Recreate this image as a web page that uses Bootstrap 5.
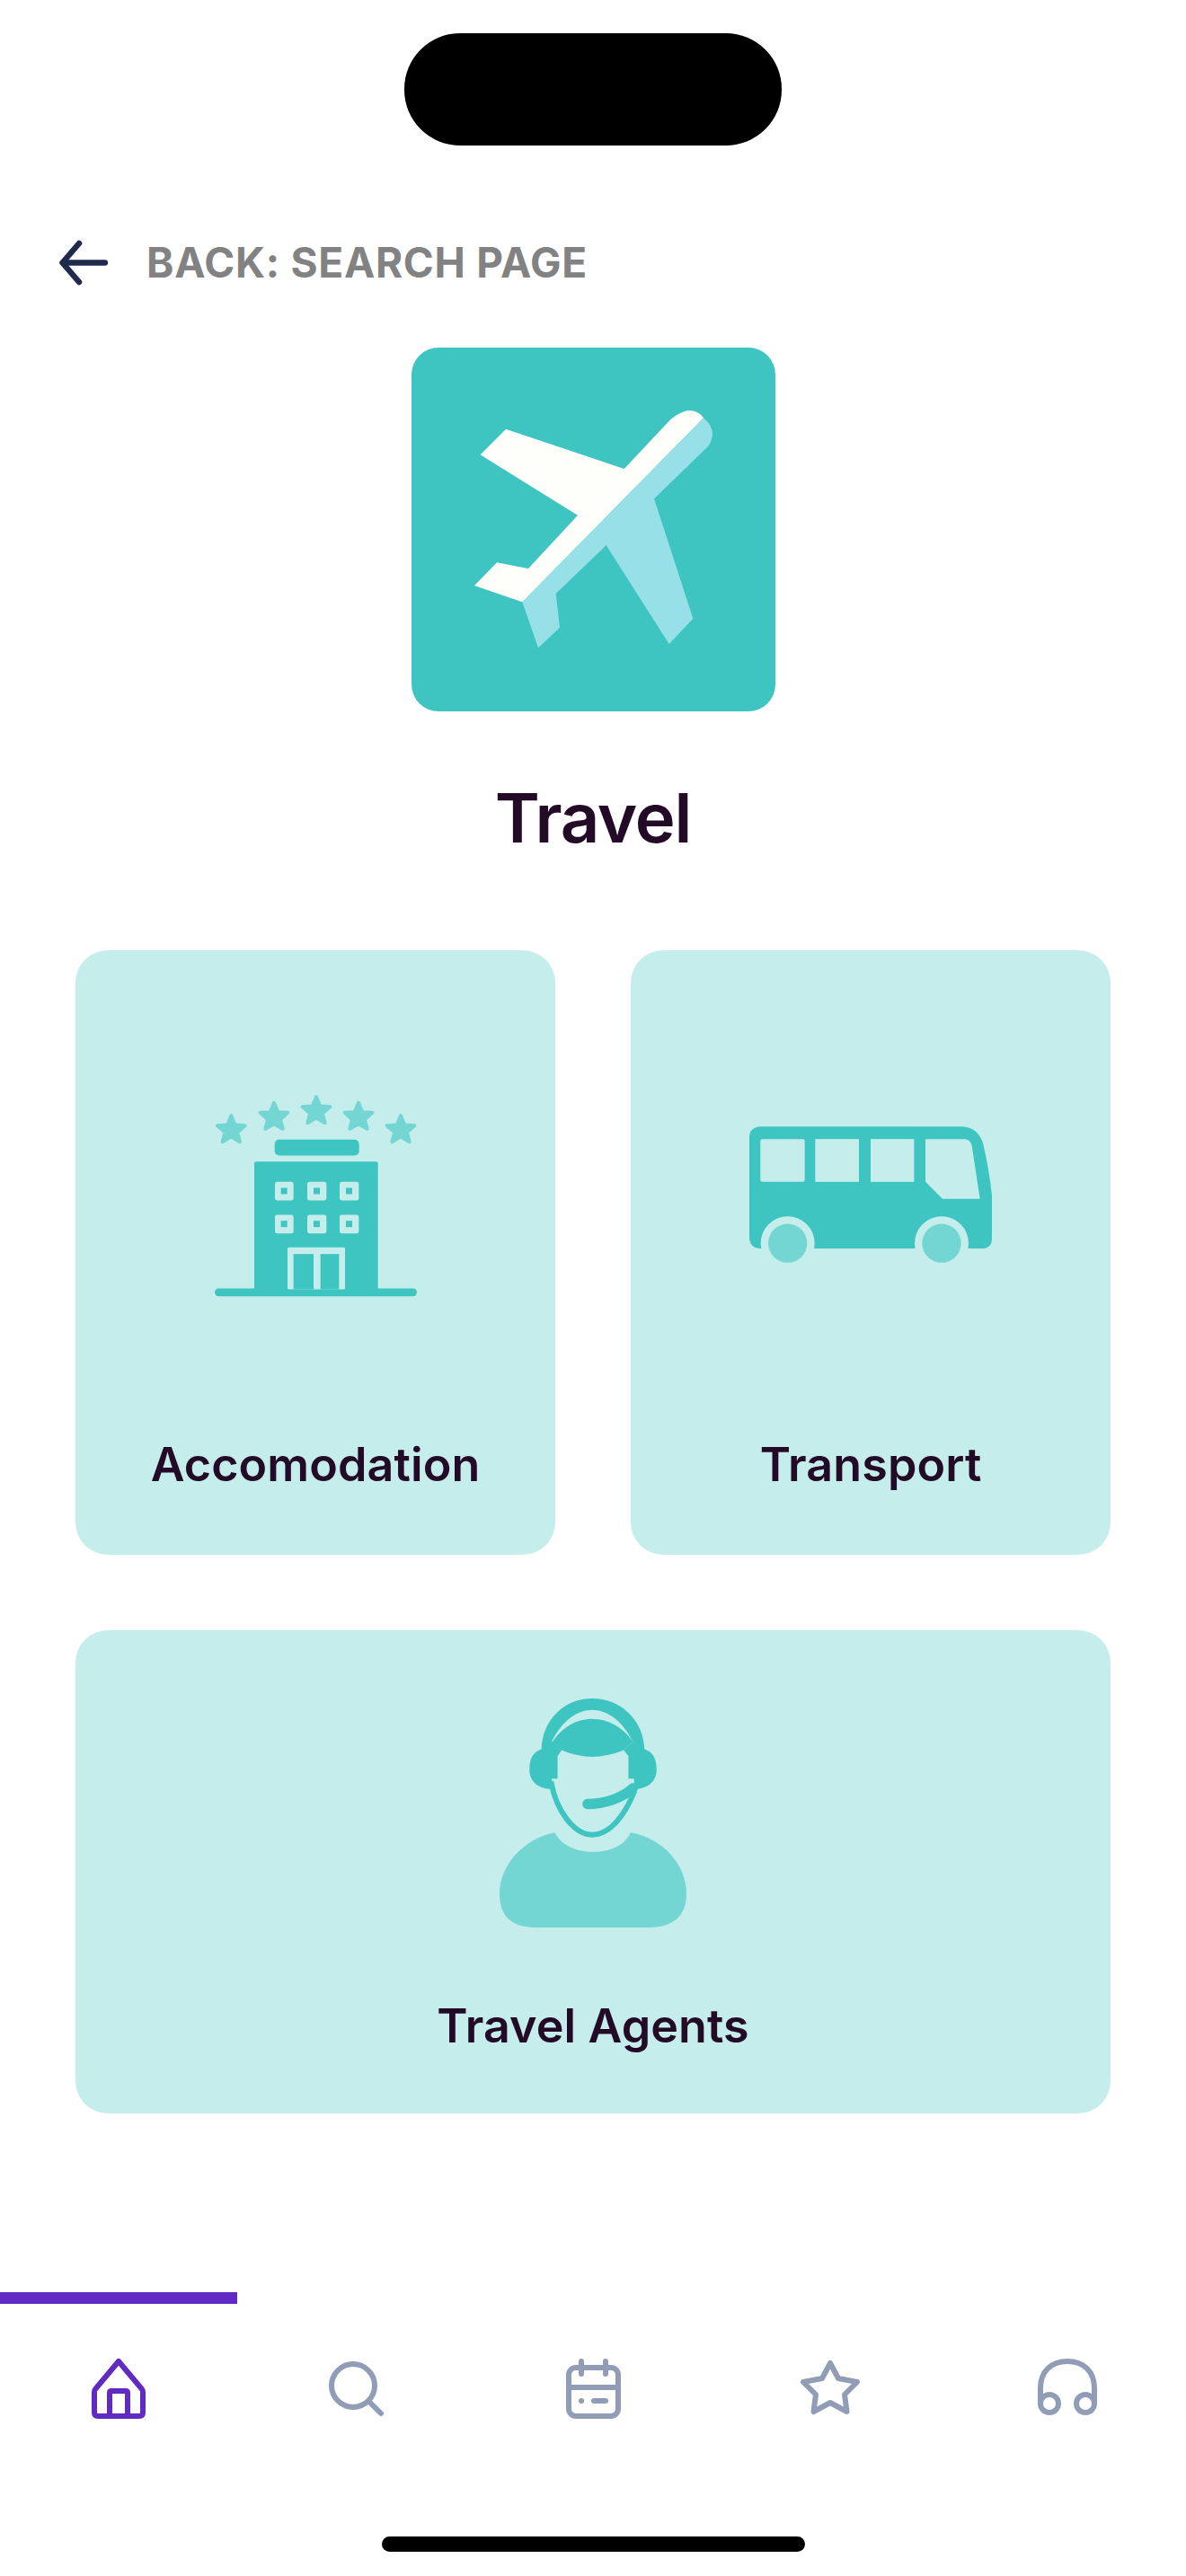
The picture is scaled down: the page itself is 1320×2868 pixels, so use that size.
<!DOCTYPE html>
<html lang="en">
<head>
<meta charset="utf-8">
<title>Travel</title>
<link href="https://cdn.jsdelivr.net/npm/bootstrap@5.3.0/dist/css/bootstrap.min.css" rel="stylesheet">
<style>
body{background:#fff;font-family:Inter,"Liberation Sans",sans-serif;color:#230a26}
.phone-page{width:1320px;height:2868px;overflow:hidden}
.sensor-island{width:420px;height:125px;margin-top:37px;background:#000;border-radius:62px}
.back-row{height:54px;margin-top:103px;padding-left:66px;gap:43px}
.back-label{font-size:46px;font-weight:700;line-height:54px;color:#828282;letter-spacing:.7px}
.hero-tile{width:405px;height:405px;margin-top:68px;background:#3fc5c1;border-radius:30px}
.page-heading{font-size:76px;font-weight:600;line-height:100px;margin:68px 0 0;color:#230a26;letter-spacing:-1.2px}
.category-grid{display:grid;grid-template-columns:534px 534px;gap:84px;padding:0 84px;margin-top:98px}
.category-card{background:#c5edeb;border-radius:36px}
.category-tall{height:673px}
.category-wide{grid-column:1 / 3;height:538px;padding-top:76px}
.icon-zone{height:544px}
.category-label{font-size:52px;font-weight:600;line-height:58px;color:#230a26;margin:0;letter-spacing:.1px}
.category-tall .category-label{margin-bottom:71px}
.category-wide .category-label{margin-top:81px}
.tab-bar{margin-top:auto}
.tab-item{width:264px;height:148px;padding-top:58px;border-top:13px solid transparent}
.tab-item.is-current{border-top-color:#602ac3}
.tab-icon{fill:none;stroke:#919db6;stroke-width:6;stroke-linecap:round;stroke-linejoin:round}
.is-current .tab-icon{stroke:#602ac3}
.home-indicator-wrap{height:168px;padding-top:124px}
.home-indicator{width:471px;height:17px;background:#000;border-radius:9px}
</style>
</head>
<body>
<div class="phone-page d-flex flex-column">
  <div class="sensor-island mx-auto flex-shrink-0"></div>

  <a class="back-row d-flex align-items-center text-decoration-none flex-shrink-0" href="#">
    <svg width="54" height="54" viewBox="0 0 54 54" fill="none" stroke="#1f2a4d" stroke-width="6.5" stroke-linecap="round" stroke-linejoin="round" aria-hidden="true"><path d="M22 6 L3.500 27.500 L22 49"/><path d="M4 27.500 H51"/></svg>
    <span class="back-label">BACK: SEARCH PAGE</span>
  </a>

  <div class="hero-tile mx-auto flex-shrink-0">
    <svg width="405" height="405" viewBox="0 0 1215 1215" aria-hidden="true">
      <path fill="#fefffb" d="M370 850 L210 795 L285 718 L390 738 L555 560 L230 358 L315 272 L710 405 L865 240 Q900 210 930 210 Q960 212 975 235 Z"/>
      <path fill="#98e0e8" d="M975 235 Q1005 260 1005 290 Q1002 315 990 330 L810 505 L940 905 L860 990 L650 660 L482 822 L495 935 L423 1003 L370 850 Z"/>
    </svg>
  </div>

  <h1 class="page-heading text-center">Travel</h1>

  <div class="category-grid">
    <div class="card border-0 category-card category-tall">
      <div class="icon-zone d-flex align-items-center justify-content-center">
        <svg width="225" height="227" viewBox="115 80 675 680" aria-hidden="true">
          <defs><polygon id="hotelStar" points="0,-48 13,-17 46,-15 21,7 29,39 0,22 -29,39 -21,7 -46,-15 -13,-17" stroke-width="12" stroke-linejoin="round"/></defs>
          <g fill="#74d6d3" stroke="#74d6d3">
            <use href="#hotelStar" x="170" y="203"/><use href="#hotelStar" x="313" y="160"/><use href="#hotelStar" x="454" y="140"/><use href="#hotelStar" x="595" y="160"/><use href="#hotelStar" x="736" y="203"/>
          </g>
          <g fill="#3fc5c1">
            <rect x="315" y="235" width="282" height="53" rx="15"/>
            <rect x="247" y="308" width="413" height="435" rx="6"/>
            <rect x="115" y="732" width="675" height="26" rx="13"/>
          </g>
          <g fill="#c5edeb">
            <rect x="316" y="376" width="62" height="62" rx="8"/><rect x="424" y="376" width="64" height="62" rx="8"/><rect x="532" y="376" width="64" height="62" rx="8"/>
            <rect x="316" y="486" width="62" height="62" rx="8"/><rect x="424" y="486" width="64" height="62" rx="8"/><rect x="532" y="486" width="64" height="62" rx="8"/>
            <rect x="358" y="595" width="192" height="140" rx="4"/>
          </g>
          <g fill="#3fc5c1">
            <rect x="336" y="396" width="21" height="21"/><rect x="445" y="396" width="21" height="21"/><rect x="553" y="396" width="21" height="21"/>
            <rect x="336" y="506" width="21" height="21"/><rect x="445" y="506" width="21" height="21"/><rect x="553" y="506" width="21" height="21"/>
            <rect x="378" y="617" width="67" height="118"/><rect x="468" y="617" width="62" height="118"/>
          </g>
        </svg>
      </div>
      <p class="category-label text-center">Accomodation</p>
    </div>

    <div class="card border-0 category-card category-tall">
      <div class="icon-zone d-flex align-items-center justify-content-center">
        <svg width="270" height="152" viewBox="105 100 810 455" aria-hidden="true">
          <path fill="#3fc5c1" d="M140 100 H820 Q868 105 885 155 Q905 240 915 330 V475 Q915 505 885 508 H140 Q108 505 105 475 V135 Q105 105 140 100 Z"/>
          <g fill="#c5edeb">
            <rect x="142" y="142" width="148" height="143" rx="6"/>
            <rect x="325" y="142" width="146" height="143"/>
            <rect x="510" y="142" width="145" height="143"/>
            <path d="M693 142 H825 Q845 145 848 165 L875 342 H750 L693 285 Z"/>
            <circle cx="233" cy="490" r="90"/><circle cx="747" cy="490" r="90"/>
            <rect x="130" y="508" width="760" height="60"/>
          </g>
          <circle cx="233" cy="490" r="65" fill="#74d6d3"/><circle cx="747" cy="490" r="65" fill="#74d6d3"/>
        </svg>
      </div>
      <p class="category-label text-center">Transport</p>
    </div>

    <div class="card border-0 category-card category-wide align-items-center">
      <svg width="208" height="255" viewBox="110 92 625 766" aria-hidden="true">
        <path fill="#74d6d3" d="M295 540 C320 590 380 605 420 605 C470 605 525 590 548 540 C660 560 735 650 735 745 C735 820 690 858 610 858 L230 858 C150 858 110 820 110 745 C110 650 190 560 295 540 Z"/>
        <g fill="#3fc5c1">
          <path d="M250 270 C250 160 330 92 420 92 C510 92 595 160 595 270 L555 235 C520 165 470 130 420 130 C370 130 320 165 285 235 Z"/>
          <path d="M285 240 C320 185 370 160 420 160 C470 160 520 185 555 235 L525 265 C490 280 450 287 420 287 C390 287 350 280 318 265 Z"/>
          <path d="M250 262 L285 235 L318 265 L304 285 V360 H285 V395 C240 395 210 370 210 330 C210 290 225 270 250 262 Z"/>
          <path d="M595 262 L555 235 L525 265 L541 285 V360 H560 V395 C605 395 635 370 635 330 C635 290 620 270 595 262 Z"/>
        </g>
        <path fill="none" stroke="#3fc5c1" stroke-width="18" d="M282 370 C300 470 360 548 420 548 C480 548 530 480 562 400"/>
        <path fill="none" stroke="#3fc5c1" stroke-width="34" stroke-linecap="round" d="M404 445 C460 445 520 425 556 392"/>
      </svg>
      <p class="category-label text-center">Travel Agents</p>
    </div>
  </div>

  <nav class="tab-bar d-flex flex-shrink-0" aria-label="Main">
    <a class="tab-item is-current d-flex justify-content-center" href="#" aria-label="Home">
      <svg class="tab-icon" width="72" height="72" viewBox="0 0 72 72"><path d="M36 6 L62 37 Q63 38 63 40 V63 Q63 67 59 67 H13 Q9 67 9 63 V40 Q9 38 10 37 Z"/><path d="M26 67 V41 Q26 39 28 39 H44 Q46 39 46 41 V67"/></svg>
    </a>
    <a class="tab-item d-flex justify-content-center" href="#" aria-label="Search">
      <svg class="tab-icon" width="72" height="72" viewBox="0 0 72 72"><circle cx="33" cy="33" r="24"/><path d="M52 52 L64 64"/></svg>
    </a>
    <a class="tab-item d-flex justify-content-center" href="#" aria-label="Calendar">
      <svg class="tab-icon" width="72" height="72" viewBox="0 0 72 72"><rect x="9" y="13" width="55" height="54" rx="8"/><path d="M9 35 H64"/><path d="M23 6 V20"/><path d="M50 6 V20"/><path d="M23 50 H23.100"/><path d="M37 50 H50"/></svg>
    </a>
    <a class="tab-item d-flex justify-content-center" href="#" aria-label="Favourites">
      <svg class="tab-icon" width="72" height="72" viewBox="0 0 72 72"><path d="M36 8 L45 25 L66 29 L52 43 L54.500 62 L36 52 L17.500 62 L20 43 L6 29 L27 25 Z"/></svg>
    </a>
    <a class="tab-item d-flex justify-content-center" href="#" aria-label="Support">
      <svg class="tab-icon" width="72" height="72" viewBox="0 0 72 72"><path d="M6 53 V36 C6 17 18 6 36 6 C54 6 66 17 66 36 V53"/><circle cx="16" cy="53" r="10"/><circle cx="56" cy="53" r="10"/></svg>
    </a>
  </nav>
  <div class="home-indicator-wrap flex-shrink-0 d-flex justify-content-center">
    <div class="home-indicator"></div>
  </div>
</div>
<script src="https://cdn.jsdelivr.net/npm/bootstrap@5.3.0/dist/js/bootstrap.bundle.min.js"></script>
</body>
</html>
